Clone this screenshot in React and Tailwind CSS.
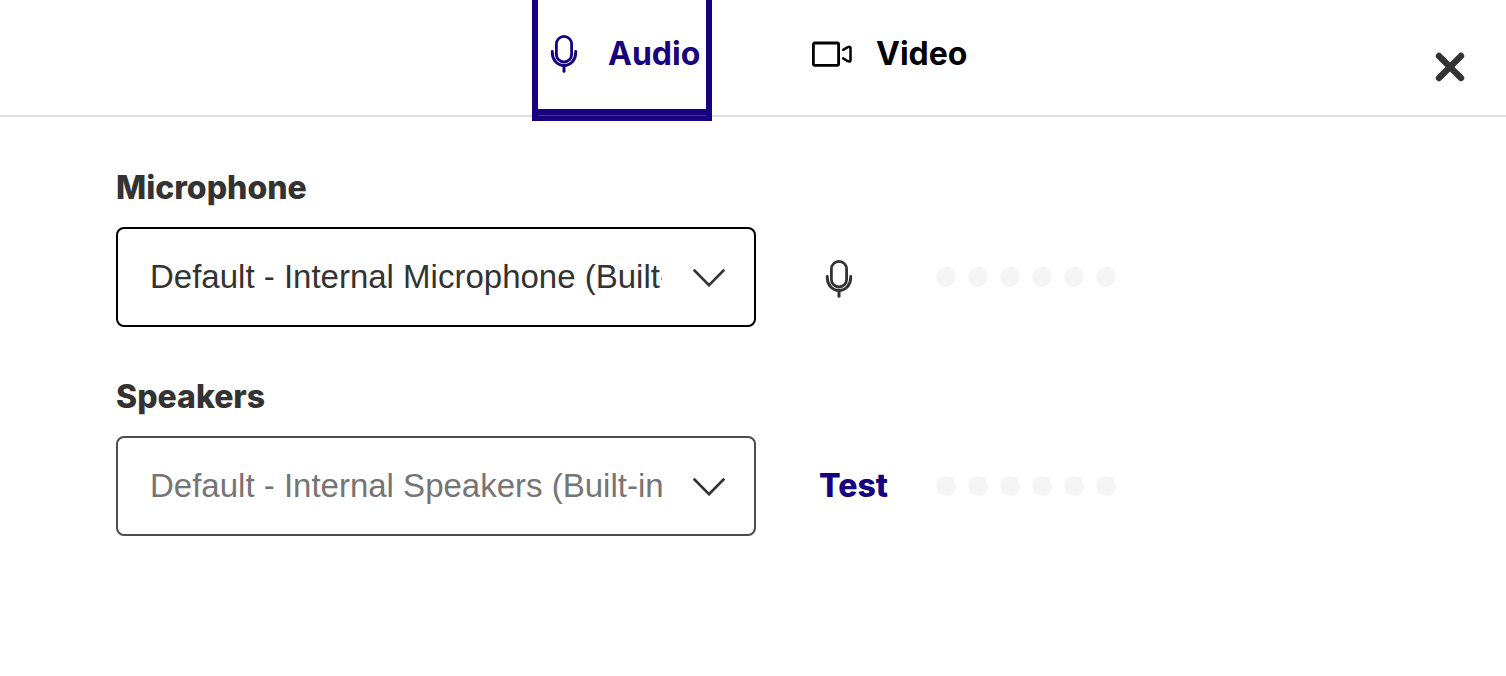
import React from "react";

function MicIcon({ className }) {
  return (
    <svg viewBox="0 0 28 38" className={className} fill="none" stroke="currentColor" aria-hidden="true">
      <rect x="6.4" y="1.4" width="15.2" height="25.6" rx="7.6" strokeWidth="2.8" />
      <path d="M2.3 16.4v1.4c0 7 5 12.6 11.7 12.6s11.7-5.6 11.7-12.6v-1.4" strokeWidth="2.9" strokeLinecap="round" />
      <path d="M14 31v5.2" strokeWidth="3" strokeLinecap="round" />
    </svg>
  );
}

function CameraIcon() {
  return (
    <svg viewBox="0 0 40 28" className="h-7 w-10 shrink-0" fill="none" stroke="currentColor" aria-hidden="true">
      <rect x="1.4" y="3" width="25.2" height="22.4" rx="1.4" strokeWidth="2.8" />
      <path d="M31.2 9.8l4.6-2.6c1.7-.7 2.7-.3 2.7.9v12.2c0 1.2-1 1.6-2.7.9l-4.6-2.8" strokeWidth="2.5" strokeLinecap="round" strokeLinejoin="round" />
    </svg>
  );
}

function Tab({ label, icon, active }) {
  return (
    <button
      type="button"
      role="tab"
      aria-selected={active}
      className={
        active
          ? "-mb-1.5 flex h-[121px] w-45 items-start border-x-6 border-b-5 border-[#18007f] px-3 pt-[33px] text-[#18007f] shadow-[inset_0_-1px_#453597,inset_0_-7px_#18007f]"
          : "flex w-45 items-start px-[18px] pt-[33px] text-black"
      }
    >
      <span className={active ? "flex items-center gap-[30px]" : "flex items-center gap-6"}>
        {icon}
        <span className="text-[32px] leading-[42px] font-bold">{label}</span>
      </span>
    </button>
  );
}

function Level() {
  return (
    <div className="flex gap-3" aria-hidden="true">
      {[0, 1, 2, 3, 4, 5].map((n) => (
        <span key={n} className="size-5 rounded-full bg-[#f5f5f8]" />
      ))}
    </div>
  );
}

function Device({ id, label, option, selectClass, children }) {
  return (
    <section>
      <label htmlFor={id} className="block text-[32px] leading-10 font-extrabold">{label}</label>
      <div className="mt-[19px] flex items-center">
        <div className="relative w-160">
          <select
            id={id}
            className={
              "block h-25 w-full appearance-none rounded-lg border-2 bg-white pr-[92px] pb-px pl-8 font-['Liberation_Sans',Arial,sans-serif] text-[33px] " + selectClass
            }
          >
            <option>{option}</option>
          </select>
          <svg viewBox="0 0 32 18" className="pointer-events-none absolute top-[42px] right-[31px] h-[18px] w-8 text-[#333333]" fill="none" stroke="currentColor" aria-hidden="true">
            <path d="M1.5 1.5L16 16.2 30.5 1.5" strokeWidth="2.6" strokeLinecap="round" />
          </svg>
        </div>
        <div className="flex w-45 items-center pl-[63px]">{children}</div>
        <Level />
      </div>
    </section>
  );
}

export default function App() {
  return (
    <main className="min-h-screen bg-white font-['Inter',sans-serif] text-[#333333]">
      <header className="relative h-[117px] border-b-2 border-[#dedede]">
        <div role="tablist" className="flex justify-center gap-[82px]">
          <Tab label="Audio" active icon={<MicIcon className="h-[38px] w-7 shrink-0" />} />
          <Tab label="Video" active={false} icon={<CameraIcon />} />
        </div>
        <button type="button" aria-label="Close" className="absolute top-[52px] right-[41px]">
          <svg viewBox="0 0 30 30" className="size-[30px]" fill="none" stroke="currentColor" aria-hidden="true">
            <path d="M4 4l22 22M26 4L4 26" strokeWidth="6.4" strokeLinecap="round" />
          </svg>
        </button>
      </header>
      <div className="flex flex-col gap-[50px] px-29 pt-[51px]">
        <Device id="mic" label="Microphone" option="Default - Internal Microphone (Built-in)" selectClass="border-black text-[#333333]">
          <MicIcon className="mt-1 ml-1.5 h-[38px] w-7" />
        </Device>
        <Device id="speakers" label="Speakers" option="Default - Internal Speakers (Built-in)" selectClass="border-[#4d4d4d] text-[#757575]">
          <button type="button" className="text-[32px] leading-10 font-extrabold text-[#18007f]">Test</button>
        </Device>
      </div>
    </main>
  );
}
